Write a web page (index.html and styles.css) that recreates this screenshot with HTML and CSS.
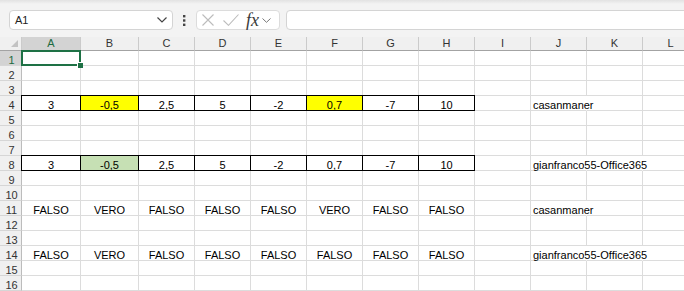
FILE: index.html
```html
<!DOCTYPE html>
<html lang="it">
<head>
  <meta charset="UTF-8" />
  <title>Foglio1</title>
  <link rel="stylesheet" href="styles.css">
</head>
<body>
  <div class="fbar">
    <div class="namebox">
      <span>A1</span>
      <svg class="chev" width="10" height="6" viewBox="0 0 10 6"><polyline points="0.5,0.5 5,5 9.5,0.5" fill="none" stroke="#444" stroke-width="1.2"/></svg>
    </div>
    <svg class="dots" width="3" height="11" viewBox="0 0 3 11"><rect x="0" y="0" width="2.4" height="2.4" fill="#444"/><rect x="0" y="4.3" width="2.4" height="2.4" fill="#444"/><rect x="0" y="8.6" width="2.4" height="2.4" fill="#444"/></svg>
    <div class="fxbox">
      <svg width="12" height="12" viewBox="0 0 12 12"><path d="M0.5 0.5 L11.5 11.5 M11.5 0.5 L0.5 11.5" stroke="#bcbcbc" stroke-width="1.1" fill="none"/></svg>
      <svg class="ok" width="16" height="12" viewBox="0 0 16 12"><polyline points="0.5,6.5 5.5,11.3 15.5,0.5" fill="none" stroke="#bcbcbc" stroke-width="1.1"/></svg>
      <span class="fx">fx</span>
      <svg class="chev small" width="9" height="5" viewBox="0 0 9 5"><polyline points="0.5,0.5 4.5,4.3 8.5,0.5" fill="none" stroke="#777" stroke-width="1"/></svg>
    </div>
    <div class="formula"></div>
  </div>

  <div class="sheet">
    <!-- intestazioni -->
    <div class="hd corner"><svg width="7" height="7" viewBox="0 0 7 7"><polygon points="0,7 7,7 7,0" fill="#c3c3c3"/></svg></div>
    <div class="hd on">A</div><div class="hd">B</div><div class="hd">C</div><div class="hd">D</div><div class="hd">E</div><div class="hd">F</div>
    <div class="hd">G</div><div class="hd">H</div><div class="hd">I</div><div class="hd">J</div><div class="hd">K</div><div class="hd">L</div>

    <!-- 1 -->
    <div class="rh on">1</div>
    <div class="c a1"><div class="sel"><span class="handle"></span></div></div>
    <div class="c"></div><div class="c"></div><div class="c"></div><div class="c"></div><div class="c"></div>
    <div class="c"></div><div class="c"></div><div class="c"></div><div class="c"></div><div class="c"></div><div class="c"></div>
    <!-- 2 -->
    <div class="rh">2</div>
    <div class="c"></div><div class="c"></div><div class="c"></div><div class="c"></div><div class="c"></div><div class="c"></div>
    <div class="c"></div><div class="c"></div><div class="c"></div><div class="c"></div><div class="c"></div><div class="c"></div>
    <!-- 3 -->
    <div class="rh">3</div>
    <div class="c"></div><div class="c"></div><div class="c"></div><div class="c"></div><div class="c"></div><div class="c"></div>
    <div class="c"></div><div class="c"></div><div class="c"></div><div class="c"></div><div class="c"></div><div class="c"></div>
    <!-- 4 -->
    <div class="rh">4</div>
    <div class="c b">3</div><div class="c b y">-0,5</div><div class="c b">2,5</div><div class="c b">5</div>
    <div class="c b">-2</div><div class="c b y">0,7</div><div class="c b">-7</div><div class="c b">10</div>
    <div class="c"></div><div class="c l nx">casanmaner</div><div class="c"></div><div class="c"></div>
    <!-- 5 -->
    <div class="rh">5</div>
    <div class="c"></div><div class="c"></div><div class="c"></div><div class="c"></div><div class="c"></div><div class="c"></div>
    <div class="c"></div><div class="c"></div><div class="c"></div><div class="c"></div><div class="c"></div><div class="c"></div>
    <!-- 6 -->
    <div class="rh">6</div>
    <div class="c"></div><div class="c"></div><div class="c"></div><div class="c"></div><div class="c"></div><div class="c"></div>
    <div class="c"></div><div class="c"></div><div class="c"></div><div class="c"></div><div class="c"></div><div class="c"></div>
    <!-- 7 -->
    <div class="rh">7</div>
    <div class="c"></div><div class="c"></div><div class="c"></div><div class="c"></div><div class="c"></div><div class="c"></div>
    <div class="c"></div><div class="c"></div><div class="c"></div><div class="c"></div><div class="c"></div><div class="c"></div>
    <!-- 8 -->
    <div class="rh">8</div>
    <div class="c b">3</div><div class="c b g">-0,5</div><div class="c b">2,5</div><div class="c b">5</div>
    <div class="c b">-2</div><div class="c b">0,7</div><div class="c b">-7</div><div class="c b">10</div>
    <div class="c"></div><div class="c l nx">gianfranco55-Office365</div><div class="c nx"></div><div class="c"></div>
    <!-- 9 -->
    <div class="rh">9</div>
    <div class="c"></div><div class="c"></div><div class="c"></div><div class="c"></div><div class="c"></div><div class="c"></div>
    <div class="c"></div><div class="c"></div><div class="c"></div><div class="c"></div><div class="c"></div><div class="c"></div>
    <!-- 10 -->
    <div class="rh">10</div>
    <div class="c"></div><div class="c"></div><div class="c"></div><div class="c"></div><div class="c"></div><div class="c"></div>
    <div class="c"></div><div class="c"></div><div class="c"></div><div class="c"></div><div class="c"></div><div class="c"></div>
    <!-- 11 -->
    <div class="rh">11</div>
    <div class="c">FALSO</div><div class="c">VERO</div><div class="c">FALSO</div><div class="c">FALSO</div>
    <div class="c">FALSO</div><div class="c">VERO</div><div class="c">FALSO</div><div class="c">FALSO</div>
    <div class="c"></div><div class="c l nx">casanmaner</div><div class="c"></div><div class="c"></div>
    <!-- 12 -->
    <div class="rh">12</div>
    <div class="c"></div><div class="c"></div><div class="c"></div><div class="c"></div><div class="c"></div><div class="c"></div>
    <div class="c"></div><div class="c"></div><div class="c"></div><div class="c"></div><div class="c"></div><div class="c"></div>
    <!-- 13 -->
    <div class="rh">13</div>
    <div class="c"></div><div class="c"></div><div class="c"></div><div class="c"></div><div class="c"></div><div class="c"></div>
    <div class="c"></div><div class="c"></div><div class="c"></div><div class="c"></div><div class="c"></div><div class="c"></div>
    <!-- 14 -->
    <div class="rh">14</div>
    <div class="c">FALSO</div><div class="c">VERO</div><div class="c">FALSO</div><div class="c">FALSO</div>
    <div class="c">FALSO</div><div class="c">FALSO</div><div class="c">FALSO</div><div class="c">FALSO</div>
    <div class="c"></div><div class="c l nx">gianfranco55-Office365</div><div class="c nx"></div><div class="c"></div>
    <!-- 15 -->
    <div class="rh">15</div>
    <div class="c"></div><div class="c"></div><div class="c"></div><div class="c"></div><div class="c"></div><div class="c"></div>
    <div class="c"></div><div class="c"></div><div class="c"></div><div class="c"></div><div class="c"></div><div class="c"></div>
    <!-- 16 -->
    <div class="rh">16</div>
    <div class="c"></div><div class="c"></div><div class="c"></div><div class="c"></div><div class="c"></div><div class="c"></div>
    <div class="c"></div><div class="c"></div><div class="c"></div><div class="c"></div><div class="c"></div><div class="c"></div>
  </div>
</body>
</html>
```

FILE: styles.css
```css
html, body {
  margin: 0;
  padding: 0;
}
body {
  width: 684px;
  height: 291px;
  overflow: hidden;
  background: #fff;
  font-family: "Liberation Sans", Arial, sans-serif;
  color: #000;
}

/* barra della formula */
.fbar {
  height: 37px;
  box-sizing: border-box;
  padding-top: 10px;
  display: flex;
  align-items: flex-start;
  background: linear-gradient(#e2e2e2, #f3f3f3 4px, #f3f3f3);
}
.fbar > * {
  flex: none;
}
.namebox {
  width: 164px;
  height: 20px;
  box-sizing: border-box;
  margin-left: 9px;
  padding: 0 5px;
  display: flex;
  align-items: center;
  background: #fff;
  border: 1px solid #d4d4d4;
  border-radius: 4px;
  font-size: 11px;
  color: #222;
}
.namebox .chev {
  margin-left: auto;
}
.dots {
  margin: 5px 0 0 10px;
}
.fxbox {
  width: 84px;
  height: 20px;
  box-sizing: border-box;
  margin-left: 10px;
  padding-left: 5px;
  display: flex;
  align-items: center;
  background: #fff;
  border: 1px solid #dcdcdc;
  border-radius: 4px;
}
.fxbox .ok {
  margin-left: 9px;
}
.fx {
  margin-left: 7px;
  font: italic 18px/1 "Liberation Serif", "Times New Roman", serif;
  color: #3a3a3a;
}
.chev.small {
  margin-left: 3px;
  margin-top: 1px;
}
.formula {
  width: 430px;
  height: 20px;
  box-sizing: border-box;
  margin-left: 6px;
  background: #fff;
  border: 1px solid #d4d4d4;
  border-radius: 4px;
}

/* griglia */
.sheet {
  display: grid;
  grid-template-columns: 22px 59px 58px repeat(10, 56px);
  grid-template-rows: 14px repeat(16, 15px);
  font-size: 11px;
}
.sheet > div {
  box-sizing: border-box;
  min-width: 0;
  white-space: nowrap;
}
.hd {
  background: #f0f0f0;
  border-right: 1px solid #cbcbcb;
  border-bottom: 1px solid #a3a3a3;
  line-height: 13px;
  text-align: center;
  color: #333;
}
.hd.on {
  background: #d3d3d3;
  color: #1c6a3f;
}
.corner {
  display: flex;
  align-items: flex-end;
  justify-content: flex-end;
  padding: 0 3px 3px 0;
}
.corner svg {
  display: block;
}
.rh {
  background: #f0f0f0;
  border-right: 1px solid #bcbcbc;
  border-bottom: 1px solid #d6d6d6;
  padding: 2px 0 0 2px;
  line-height: 14px;
  text-align: center;
  color: #333;
}
.rh.on {
  background: #d3d3d3;
  color: #1c6a3f;
}
.c {
  border-right: 1px solid #dcdcdc;
  border-bottom: 1px solid #dcdcdc;
  padding: 2px 2px 0;
  line-height: 14px;
  text-align: center;
}
.c.l {
  text-align: left;
}
.c.nx {
  border-right-color: transparent;
}
.c.b {
  border-right-color: #000;
  border-bottom-color: #000;
  box-shadow: -1px 0 0 #000, 0 -1px 0 #000, -1px -1px 0 #000;
}
.c.y {
  background: #ffff00;
}
.c.g {
  background: #c6e0b4;
}

/* cella attiva */
.a1 {
  position: relative;
}
.sel {
  position: absolute;
  top: -1px;
  left: -1px;
  right: -1px;
  bottom: -1px;
  border: 2px solid #1e7145;
  z-index: 1;
}
.handle {
  position: absolute;
  right: -4px;
  bottom: -4px;
  width: 5px;
  height: 5px;
  background: #1e7145;
  border: 1px solid #fff;
  border-right: none;
  border-bottom: none;
}
```
